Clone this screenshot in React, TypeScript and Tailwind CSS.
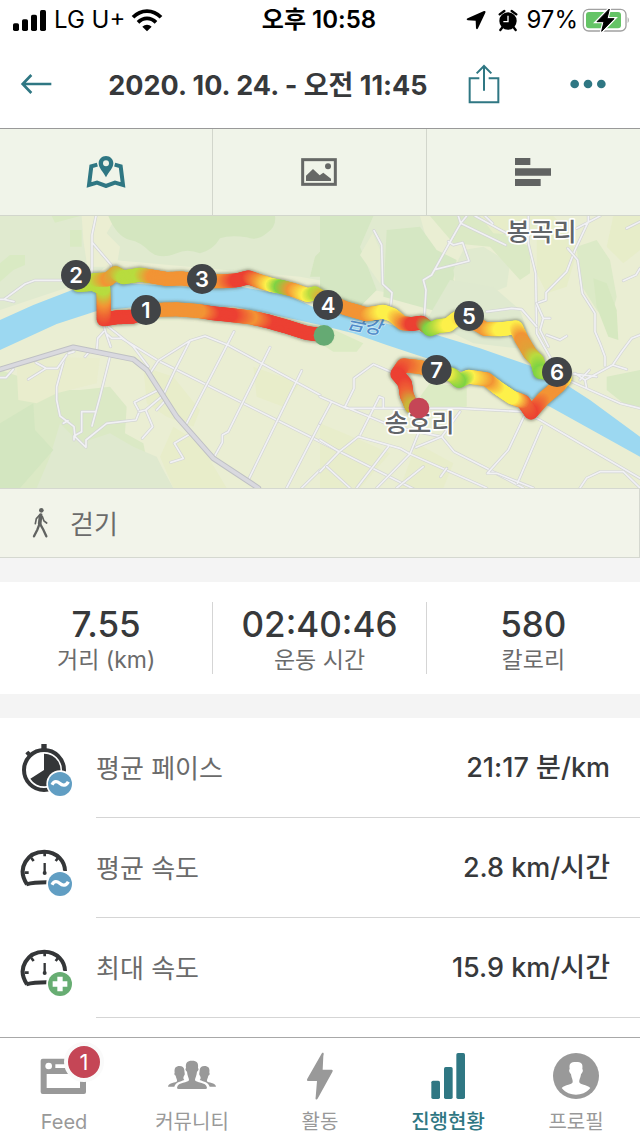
import { ReactNode } from "react";

type RoutePoint = [number, number, string];

interface StatProps {
  value: string;
  label: string;
}

interface DetailProps {
  label: string;
  value: string;
  icon: ReactNode;
}

interface NavItemProps {
  label: string;
  icon: ReactNode;
  active?: boolean;
  badge?: number;
}

const RED = "#ec4033";
const RED_ORANGE = "#ee6434";
const ORANGE = "#f29435";
const YELLOW = "#fdf04a";
const LIME = "#b8dc3f";
const GREEN = "#7ed344";

// walked route, each point carries the pace colour at that place
const route: RoutePoint[] = [
  [972, 376, RED],
  [920, 369, RED],
  [860, 350, RED],
  [800, 333, RED],
  [750, 322, ORANGE],
  [690, 315, RED],
  [640, 310, RED],
  [595, 303, ORANGE],
  [530, 298, ORANGE],
  [438, 300, ORANGE],
  [400, 320, RED],
  [350, 322, RED],
  [311, 328, RED],
  [311, 300, RED_ORANGE],
  [311, 270, ORANGE],
  [310, 235, LIME],
  [280, 222, LIME],
  [235, 225, LIME],
  [285, 210, LIME],
  [325, 208, ORANGE],
  [346, 189, "#d9ab38"],
  [370, 202, LIME],
  [420, 194, LIME],
  [460, 200, ORANGE],
  [500, 207, ORANGE],
  [545, 205, ORANGE],
  [606, 214, ORANGE],
  [665, 214, ORANGE],
  [710, 211, RED],
  [745, 202, RED],
  [780, 214, ORANGE],
  [815, 225, YELLOW],
  [842, 230, GREEN],
  [880, 240, ORANGE],
  [922, 255, YELLOW],
  [945, 250, LIME],
  [985, 275, ORANGE],
  [1040, 296, ORANGE],
  [1100, 313, ORANGE],
  [1150, 305, YELLOW],
  [1178, 315, YELLOW],
  [1208, 340, ORANGE],
  [1235, 342, RED],
  [1265, 338, RED],
  [1290, 358, GREEN],
  [1315, 348, LIME],
  [1345, 345, YELLOW],
  [1370, 325, YELLOW],
  [1430, 342, ORANGE],
  [1455, 357, ORANGE],
  [1500, 358, YELLOW],
  [1548, 352, YELLOW],
  [1565, 388, ORANGE],
  [1590, 430, "#e0a238"],
  [1612, 452, LIME],
  [1620, 486, GREEN],
  [1690, 494, YELLOW],
  [1694, 506, YELLOW],
  [1675, 528, ORANGE],
  [1630, 566, ORANGE],
  [1593, 608, RED],
  [1570, 575, RED_ORANGE],
  [1535, 562, YELLOW],
  [1495, 535, YELLOW],
  [1460, 508, ORANGE],
  [1405, 500, YELLOW],
  [1377, 513, GREEN],
  [1355, 494, LIME],
  [1330, 488, YELLOW],
  [1310, 480, ORANGE],
  [1250, 470, ORANGE],
  [1210, 466, RED_ORANGE],
  [1192, 492, RED],
  [1215, 520, RED],
  [1220, 555, RED_ORANGE],
  [1235, 590, "#c9b53a"],
];

const mixColor = (from: string, to: string, t: number) => {
  const channel = (color: string, i: number) => parseInt(color.slice(1 + i * 2, 3 + i * 2), 16);
  const mixed = [0, 1, 2].map((i) => Math.round(channel(from, i) * (1 - t) + channel(to, i) * t));
  return `rgb(${mixed.join(",")})`;
};

// small overlapping dots give the line its smooth change of colour
const routeDots = route.slice(1).flatMap(([x, y, color], i) => {
  const [px, py, prev] = route[i];
  const steps = Math.ceil(Math.hypot(x - px, y - py) / 4);
  return Array.from({ length: steps }, (_, step) => {
    const t = (step + 1) / steps;
    return { x: px + (x - px) * t, y: py + (y - py) * t, color: mixColor(prev, color, t) };
  });
});

const markers = [
  { label: "1", x: 438, y: 300 },
  { label: "2", x: 228, y: 195 },
  { label: "3", x: 606, y: 207 },
  { label: "4", x: 984, y: 285 },
  { label: "5", x: 1407, y: 318 },
  { label: "6", x: 1671, y: 486 },
  { label: "7", x: 1310, y: 480 },
];

const fields = [
  { d: "M0 18H1260L1300 160L1230 260L900 200L340 150L270 210L0 300Z", fill: "#e0eacf" },
  { d: "M245 18H350L320 70L360 110L350 170H262L250 90Z", fill: "#ebeed2" },
  { d: "M325 18H825Q830 50 800 70Q770 95 740 82Q690 75 660 85Q640 120 600 130Q560 115 530 130Q480 150 450 125Q420 95 390 90Q350 80 325 18Z", fill: "#d4e6c0" },
  { d: "M155 18H240L215 25L165 38ZM30 135H75V165L40 180L0 215V160ZM210 60H245V110H210Z", fill: "#d9eac3" },
  { d: "M930 200L945 140L985 100V18H960L985 60L960 130V200Z", fill: "#d4e6c0" },
  { d: "M960 18H1120L1080 110L1130 240L1080 290L960 250Z", fill: "#d5e7c3" },
  { d: "M1160 60L1260 50L1310 120L1370 150L1360 210L1420 270L1330 310L1150 260Z", fill: "#d5e7c3" },
  { d: "M1118 70L1140 120V220L1080 135Z", fill: "#e7edd0" },
  { d: "M1390 120L1450 110L1530 160L1520 230L1420 270L1370 240L1360 180Z", fill: "#e0eacf" },
  { d: "M1290 18H1480L1520 80L1590 110V190L1560 210L1470 110L1360 100Z", fill: "#dbe9c5" },
  { d: "M1440 18H1660L1700 60L1730 130L1700 230L1640 250L1610 190V80L1480 70Z", fill: "#e7edc9" },
  { d: "M1730 110L1790 90L1830 150L1850 260L1830 340L1790 300L1740 220Z", fill: "#dceac7" },
  { d: "M1780 205L1820 220L1850 300L1855 390L1825 380L1790 290Z", fill: "#d6e8c0" },
  { d: "M1840 18H1920V120L1870 160L1820 110Z", fill: "#e7edc9" },
  { d: "M1350 210L1480 230L1560 300L1600 420L1420 400L1280 330Z", fill: "#dfe9cf" },
  { d: "M1820 500L1920 480V590L1870 580L1820 540Z", fill: "#d9e9c4" },
  { d: "M960 340L1090 400L1070 425H1000L960 400ZM1290 520L1400 530V590L1300 600L1260 560Z", fill: "#dcebc4" },
  { d: "M0 480L60 500L120 540L240 540L330 530L380 590L375 670L430 700L440 750L480 834H0Z", fill: "#dbe9c5" },
  { d: "M180 640L240 700L330 670L400 710L470 740L490 780L520 834H110L150 740Z", fill: "#dfe9cf" },
  { d: "M0 640L100 580L105 660L160 720L60 834H0Z", fill: "#d3e6c0" },
  { d: "M50 470L130 440L300 445L290 520L170 550L110 580L55 570Z", fill: "#e9edcd" },
  { d: "M430 470L520 500L600 600L580 650L500 620L440 580ZM760 470L900 520L850 590L770 560ZM520 650L600 700L680 834H520L480 740Z", fill: "#e8edca" },
  { d: "M960 640L1080 690L1170 730L1080 834H960ZM1250 700L1360 760L1330 834H1200Z", fill: "#e8edcb" },
];

const roads = [
  "M288 18L276 75V190M276 97L334 165V190",
  "M185 211H105L75 222L12 268L42 275M12 268H0",
  "M311 345L318 370L332 410M311 365L293 385L290 425M318 370L335 385H365M325 350L400 410L445 470M365 385L475 452L960 695L1920 1180",
  "M450 490L475 452L570 392L615 378L685 406L960 555M570 392L525 480L490 555M702 365L555 650M810 412L685 665L667 675V697L642 742M905 482L745 810M960 640L860 834M960 780L905 834",
  "M475 540L403 577L418 605L408 630L320 640L258 690V712L225 680L222 650L180 618L170 570V530L192 450M222 690V678L245 665V605H288M330 440L300 560L276 648M190 640L204 632",
  "M418 605L437 600L485 560M437 600L458 650L427 685M493 575L470 600M565 675L523 700L550 745L512 757M108 458L138 475L85 508M138 475H172L200 435M222 425L205 430M265 428L255 440M40 478L18 503H0",
  "M1122 62L1145 105L1148 222L1176 248L1172 290M1375 18L1382 40L1345 105L1295 195L1270 210L1278 240L1273 320M1400 18L1382 40L1517 105M1345 95L1360 105L1388 98L1407 153L1307 178",
  "M1425 18L1520 70M1455 18L1478 40M1585 18V100L1607 190L1610 370L1655 450M1765 18V35L1725 120L1700 185L1638 248V270L1610 280M1800 18L1730 55",
  "M1703 115L1733 150L1747 250L1785 310V365L1800 400L1815 440V468M1920 35L1880 55M1920 175L1908 195L1870 212M1460 305L1535 295L1565 298L1610 350M1610 280L1630 325H1650M1630 325L1620 360L1645 410",
  "M1640 375L1680 390L1700 378M1920 375L1895 385L1865 425L1838 465L1755 510L1760 535M1755 510L1725 490M1715 515L1770 540L1860 580L1920 595M1838 465L1880 478M1768 480L1740 510M1790 500L1720 492",
  "M1190 493L1120 463L1062 505V535L1035 590M960 560L1040 595H1380L1570 605L1620 630L1920 805M1138 560L1150 565V595M1138 560L1078 680M995 575L960 640M1035 590L1180 650L1325 680",
  "M960 690L1018 725L1075 680L1200 715L1230 732L1460 834M1018 725L960 785M1165 710L1070 834M1230 732L1130 834M1255 670L1230 732M1325 680L1248 712M1325 680L1362 725L1460 775L1570 834M1380 605L1325 680M1270 770L1190 834",
  "M1572 620L1525 720L1462 790H1490L1600 834M1625 650L1552 820M1920 834L1870 785H1800L1760 804L1740 834M980 770L1050 834M1322 800L1340 775",
];

const MapIcon = () => (
  <svg className="h-8 w-10" viewBox="0 0 120 96" fill="none">
    <path d="M34 26L16 31L9 87L33 80L60 90L87 80L111 87L104 31L86 26" stroke="#2f7783" strokeWidth="12" />
    <path d="M60 0C47 0 38 10 38 22C38 37 51 46 60 64C69 46 82 37 82 22C82 10 73 0 60 0Z" fill="#2f7783" />
    <circle cx="60" cy="22" r="9" fill="#eff3e7" />
  </svg>
);

const PhotoIcon = () => (
  <svg className="h-7 w-9" viewBox="0 0 108 84">
    <rect x="5" y="5" width="98" height="74" fill="none" stroke="#666866" strokeWidth="9" />
    <path d="M15 69V53L36 33L56 52L67 44L90 62V69Z" fill="#666866" />
    <circle cx="81" cy="25" r="9" fill="#666866" />
  </svg>
);

const BarsIcon = () => (
  <svg className="h-7 w-9" viewBox="0 0 108 84" fill="#616362">
    <path d="M0 0H46V21H0ZM0 31H108V53H0ZM0 63H77V84H0Z" />
  </svg>
);

const ShareIcon = () => (
  <svg className="h-10 w-8" viewBox="0 0 96 120" fill="none" stroke="#2f7783" strokeWidth="6">
    <path d="M34 43H5V115H91V43H62M48 80V6M26 28L48 6L70 28" />
  </svg>
);

const WalkIcon = () => (
  <svg className="h-8 w-5" viewBox="0 0 60 96" fill="none" stroke="#616361" strokeLinecap="round">
    <circle cx="34" cy="10" r="7" fill="#616361" stroke="none" />
    <path d="M32 24L29 50" strokeWidth="11" />
    <path d="M28 25L19 35L16 50M37 29L42 42L50 48" strokeWidth="5" />
    <path d="M28 52L22 68L12 88M31 52L40 68L49 88" strokeWidth="7" />
  </svg>
);

const AverageBadge = () => (
  <>
    <circle cx="120" cy="120" r="41" fill="white" />
    <circle cx="120" cy="120" r="36" fill="#619ec3" />
    <path d="M96 122C103 109 112 112 119 118C128 126 138 126 145 113" fill="none" stroke="white" strokeWidth="10" />
  </>
);

const PaceIcon = () => (
  <svg className="h-13 w-13" viewBox="0 0 156 156">
    <path d="M64 0H80V15H64ZM16 28L25 20L32 27L23 36Z" fill="#343638" />
    <circle cx="72" cy="78" r="60" fill="none" stroke="#343638" strokeWidth="12" />
    <path d="M72 78V29A49 49 0 1 1 31 104Z" fill="#343638" />
    <AverageBadge />
  </svg>
);

const SpeedIcon = ({ children }: { children: ReactNode }) => (
  <svg className="h-13 w-13" viewBox="0 0 156 156" fill="none" stroke="#343638">
    <path d="M21 121C-12 72 24 23 73 23C112 23 135 53 135 81" strokeWidth="12" />
    <path d="M19 121C41 115 59 115 80 115" strokeWidth="12" />
    <path d="M74 25V37M34 42L41 51M114 42L107 51M14 86H26" strokeWidth="8" />
    <path d="M74 57V86" strokeWidth="7" />
    <circle cx="74" cy="87" r="6" fill="#343638" stroke="none" />
    <g stroke="none">{children}</g>
  </svg>
);

const MaxBadge = () => (
  <>
    <circle cx="120" cy="120" r="41" fill="white" />
    <circle cx="120" cy="120" r="36" fill="#67ad72" />
    <path d="M112 98H128V112H142V128H128V142H112V128H98V112H112Z" fill="white" />
  </>
);

const FeedIcon = () => (
  <svg className="h-12 w-12" viewBox="0 0 144 144">
    <path d="M8 20H132Q138 20 138 26V120Q138 126 132 126H8Q2 126 2 120V26Q2 20 8 20Z" fill="#999" />
    <circle cx="26" cy="42" r="10" fill="white" />
    <path d="M46 37H124V48H46ZM20 66H120V108H20Z" fill="white" />
  </svg>
);

const CommunityIcon = () => (
  <svg className="h-12 w-12" viewBox="0 0 144 144" fill="#999">
    <path d="M72 26C57 26 52 32 54 48C50 52 54 57 57 59C58 72 63 78 63 84C62 93 29 89 27 107Q27 111 32 111H112Q117 111 117 107C115 89 82 93 81 84C81 78 86 72 87 59C90 57 94 52 90 48C92 32 87 26 72 26Z" />
    <path id="friend" d="M35 42C23 42 18 48 20 62C17 66 21 70 23 71C25 80 28 83 27 88C25 93 1 91 0 104H19C23 91 36 89 49 84C45 80 45 77 49 70C52 67 49 61 49 54C48 46 43 42 35 42Z" />
    <use href="#friend" transform="translate(144 0) scale(-1 1)" />
  </svg>
);

const ActivityIcon = () => (
  <svg className="h-12 w-12" viewBox="0 0 144 144" fill="#999">
    <path d="M78 3C85 1 83 7 82 12L80 53H107Q112 54 109 60L66 138C62 145 57 144 59 136L63 87H36Q31 86 34 80Z" />
  </svg>
);

const ProgressIcon = () => (
  <svg className="h-12 w-12" viewBox="0 0 144 144" fill="#2f7783">
    <rect x="22" y="86" width="26" height="55" rx="5" />
    <rect x="60" y="45" width="26" height="96" rx="5" />
    <rect x="97" y="3" width="26" height="138" rx="5" />
  </svg>
);

const ProfileIcon = () => (
  <svg className="h-12 w-12" viewBox="0 0 144 144">
    <circle cx="72" cy="72" r="69" fill="#999" />
    <path d="M72 30C56 30 51 35 53 50C49 56 53 62 57 67C59 80 63 83 62 91C60 98 40 98 29 108C42 123 56 128 72 128C88 128 102 123 115 108C104 98 84 98 82 91C81 83 85 80 87 67C91 62 95 56 91 50C93 35 88 30 72 30Z" fill="white" />
  </svg>
);

const stats: StatProps[] = [
  { value: "7.55", label: "거리 (km)" },
  { value: "02:40:46", label: "운동 시간" },
  { value: "580", label: "칼로리" },
];

const details: DetailProps[] = [
  { label: "평균 페이스", value: "21:17 분/km", icon: <PaceIcon /> },
  { label: "평균 속도", value: "2.8 km/시간", icon: <SpeedIcon><AverageBadge /></SpeedIcon> },
  { label: "최대 속도", value: "15.9 km/시간", icon: <SpeedIcon><MaxBadge /></SpeedIcon> },
];

const navItems: NavItemProps[] = [
  { label: "Feed", icon: <FeedIcon />, badge: 1 },
  { label: "커뮤니티", icon: <CommunityIcon /> },
  { label: "활동", icon: <ActivityIcon /> },
  { label: "진행현황", icon: <ProgressIcon />, active: true },
  { label: "프로필", icon: <ProfileIcon /> },
];

const StatusBar = () => (
  <div className="grid h-10 grid-cols-[1fr_auto_1fr] items-center pr-3.5 pl-3 text-2xl text-black">
    <div className="flex items-center gap-1.5">
      <svg className="h-6 w-9" viewBox="0 0 108 72">
        <rect x="3" y="46" width="18" height="23" rx="5" />
        <rect x="30" y="34" width="18" height="35" rx="5" />
        <rect x="57" y="20" width="18" height="49" rx="5" />
        <rect x="84" y="6" width="18" height="63" rx="5" />
      </svg>
      <span>LG U+</span>
      <svg className="h-6 w-8" viewBox="0 0 96 72" fill="none" stroke="black" strokeWidth="11">
        <path d="M6 28C30 3 66 3 90 28M21 43C37 27 59 27 75 43" />
        <path d="M48 70L34 56C42 48 54 48 62 56Z" fill="black" stroke="none" />
      </svg>
    </div>
    <time className="font-semibold">오후 10:58</time>
    <div className="flex items-center justify-end gap-2">
      <svg className="mr-1 h-5 w-5" viewBox="0 0 60 60">
        <path d="M54 3Q60 2 58 8L36 55Q33 61 30 55L29 32L5 31Q-1 28 5 25Z" />
      </svg>
      <svg className="h-6 w-5" viewBox="0 0 60 72">
        <circle cx="30" cy="39" r="26" />
        <path d="M14 57L7 66M46 57L53 66M5 19L19 9M41 9L55 19" stroke="black" strokeWidth="7" strokeLinecap="round" />
        <path d="M30 23V41H16" fill="none" stroke="white" strokeWidth="4" />
      </svg>
      <span>97%</span>
      <svg className="-mx-1 h-6 w-12" viewBox="0 0 144 72">
        <rect x="4" y="4" width="128" height="65" rx="16" fill="white" stroke="#a1a1a1" strokeWidth="4" />
        <rect x="12" y="12" width="105" height="49" rx="9" fill="#65c466" />
        <path d="M137 27Q144 36 137 46Z" fill="#a1a1a1" />
        <path d="M82 3L45 41H66L59 70L96 32H75Z" stroke="white" strokeWidth="10" />
        <path d="M82 3L45 41H66L59 70L96 32H75Z" strokeWidth="3" stroke="black" />
      </svg>
    </div>
  </div>
);

const TopBar = () => (
  <header className="flex h-[89px] items-center border-b border-[#999] pr-8 pl-5">
    <button aria-label="뒤로" className="mr-10">
      <svg className="h-6 w-8" viewBox="0 0 96 72" fill="none" stroke="#2f7783" strokeWidth="8">
        <path d="M94 36H8M34 9L8 36L34 63" />
      </svg>
    </button>
    <h1 className="flex-1 pt-1 text-center text-[27px] leading-10 font-bold whitespace-nowrap text-[#37393b]">
      2020. 10. 24. - 오전 11:45
    </h1>
    <button aria-label="공유" className="mr-17 ml-6">
      <ShareIcon />
    </button>
    <button aria-label="더 보기">
      <svg className="h-3 w-10" viewBox="0 0 120 36" fill="#2f7783">
        <circle cx="20" cy="18" r="13" />
        <circle cx="60" cy="18" r="13" />
        <circle cx="100" cy="18" r="13" />
      </svg>
    </button>
  </header>
);

const ViewTabs = () => (
  <div className="grid h-[87px] grid-cols-3 divide-x divide-[#d2d6cc] border-b border-[#d2d6cc] bg-[#f0f4e9]">
    <button aria-label="지도" className="flex items-center justify-center">
      <MapIcon />
    </button>
    <button aria-label="사진" className="flex items-center justify-center">
      <PhotoIcon />
    </button>
    <button aria-label="그래프" className="flex items-center justify-center">
      <BarsIcon />
    </button>
  </div>
);

const RouteMap = () => (
  <svg className="block h-auto w-full" viewBox="0 18 1920 816" strokeLinejoin="round" strokeLinecap="round">
    <filter id="route-shadow" x="-5%" y="-10%" width="110%" height="120%">
      <feGaussianBlur stdDeviation="4" />
    </filter>
    <rect y="18" width="1920" height="816" fill="#eaeed3" />
    {fields.map((field) => (
      <path key={field.d} d={field.d} fill={field.fill} />
    ))}
    <path
      d="M0 330L100 285L230 235L300 215L560 230L720 230L860 255L960 300L1120 330L1210 355L1310 375L1440 415L1600 470L1700 525L1770 570L1920 680V740L1650 590L1510 530L1280 445L1160 405L1060 370L960 345L800 310L700 290L400 292L290 303L170 342L0 420Z"
      fill="#9cd8f1"
    />
    {roads.map((road) => (
      <g key={road} fill="none">
        <path d={road} stroke="#d3d5d4" strokeWidth="9" />
        <path d={road} stroke="#f1f1f4" strokeWidth="5" />
      </g>
    ))}
    <g fill="none">
      <path d="M0 478L220 412L400 448L440 480L530 620L640 745L775 834" stroke="#bfc0c4" strokeWidth="17" />
      <path d="M0 478L220 412L400 448L440 480L530 620L640 745L775 834" stroke="#d9d9df" strokeWidth="11" />
    </g>
    <text
      x="1040"
      y="355"
      transform="rotate(11 1040 355)"
      className="fill-[#4f8ccb] stroke-[#d5e9f2] text-[56px] font-medium italic"
      strokeWidth="4"
      paintOrder="stroke"
    >
      금강
    </text>
    <polyline
      points={route.map(([x, y]) => `${x},${y}`).join(" ")}
      fill="none"
      stroke="#555a40"
      strokeOpacity="0.5"
      strokeWidth="50"
      filter="url(#route-shadow)"
    />
    {routeDots.map((dot, i) => (
      <circle key={i} cx={dot.x} cy={dot.y} r="21" fill={dot.color} />
    ))}
    <g
      className="fill-[#626569] stroke-white text-[76px] font-medium"
      strokeWidth="10"
      paintOrder="stroke"
      textAnchor="middle"
    >
      <text x="1625" y="94">봉곡리</text>
      <text x="1259" y="665">송호리</text>
    </g>
    <circle cx="972" cy="376" r="31" fill="#65aa73" />
    <circle cx="1257" cy="594" r="31" fill="#c54656" />
    {markers.map((marker) => (
      <g key={marker.label}>
        <circle cx={marker.x} cy={marker.y} r="45" fill="#414447" />
        <text x={marker.x} y={marker.y + 23} textAnchor="middle" className="fill-white text-[66px] font-semibold">
          {marker.label}
        </text>
      </g>
    ))}
  </svg>
);

const Stats = () => (
  <dl className="grid h-28 grid-cols-3 items-center divide-x divide-[#d5d5d5] bg-white">
    {stats.map((stat) => (
      <div key={stat.label} className="flex h-18 flex-col-reverse items-center justify-center">
        <dt className="text-[23px] leading-7 text-[#6b6b6b]">{stat.label}</dt>
        <dd className="text-[35px] leading-11 font-medium text-[#37393b]">{stat.value}</dd>
      </div>
    ))}
  </dl>
);

const Details = () => (
  <dl className="bg-white">
    {details.map((detail) => (
      <div key={detail.label} className="flex h-25 items-center pl-5">
        <div className="w-[76px] shrink-0 pt-1">{detail.icon}</div>
        <div className="flex h-full flex-1 items-center justify-between border-b border-[#d5d5d5] pt-0.5 pr-[30px]">
          <dt className="text-[26px] text-[#6b6b6b]">{detail.label}</dt>
          <dd className="text-[27px] font-medium text-[#37393b]">{detail.value}</dd>
        </div>
      </div>
    ))}
  </dl>
);

const BottomNav = () => (
  <nav className="sticky bottom-0 grid h-[99px] grid-cols-5 border-t border-[#a8a8a8] bg-white">
    {navItems.map((item) => (
      <a
        key={item.label}
        href="#"
        className={`flex flex-col items-center gap-1.5 pt-3.5 text-xl leading-8 ${
          item.active ? "font-medium text-[#2f7783]" : "text-[#999]"
        }`}
      >
        <span className="relative">
          {item.icon}
          {item.badge && (
            <span className="absolute -top-2.5 -right-4 flex h-10 w-10 items-center justify-center rounded-full border-4 border-[#fafafa] bg-[#c54656] text-[22px] text-white">
              {item.badge}
            </span>
          )}
        </span>
        {item.label}
      </a>
    ))}
  </nav>
);

const App: React.FC = () => {
  return (
    <div className="flex min-h-screen flex-col bg-white font-['Inter','Noto_Sans_CJK_KR',sans-serif]">
      <StatusBar />
      <TopBar />
      <main className="flex-1">
        <ViewTabs />
        <RouteMap />
        <div className="flex h-[70px] items-center gap-5 border-y border-r border-[#d5d8d0] bg-[#f2f4ea] px-[30px]">
          <WalkIcon />
          <span className="pt-0.5 text-[26px] text-[#6b6b6b]">걷기</span>
        </div>
        <div className="h-6 bg-[#f4f4f4]" />
        <Stats />
        <div className="h-6 bg-[#f4f4f4]" />
        <Details />
      </main>
      <BottomNav />
    </div>
  );
};

export default App;
